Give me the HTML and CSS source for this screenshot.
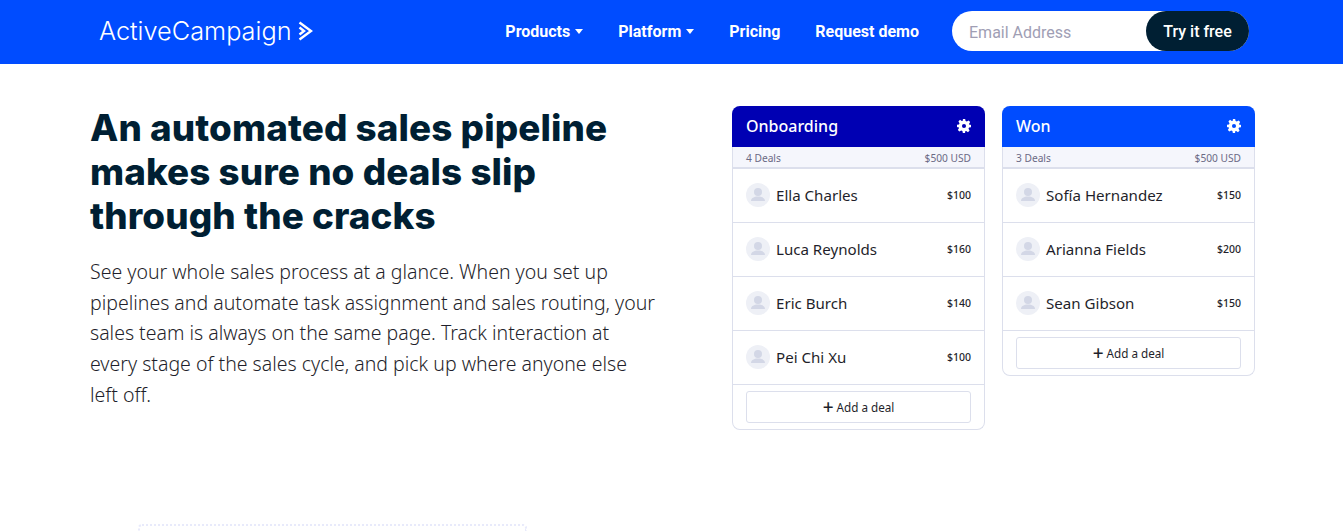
FILE: index.html
```html
<!DOCTYPE html>
<html lang="en">
<head>
  <meta charset="UTF-8" />
  <meta name="viewport" content="width=device-width, initial-scale=1" />
  <title>ActiveCampaign</title>
  <link rel="stylesheet" href="styles.css">
</head>
<body>

  <header class="topbar">
    <a class="logo" href="#">
      <span>ActiveCampaign</span>
      <svg class="logo-mark" width="15" height="20" viewBox="0 0 15 20"><path d="M1.500 1.500 13 10 1.500 18.500M1.500 6.500 6 10 1.500 13.500" fill="none" stroke="#fff" stroke-width="2.400"/></svg>
    </a>
    <nav class="nav">
      <a href="#" class="nav-link has-caret">Products</a>
      <a href="#" class="nav-link has-caret">Platform</a>
      <a href="#" class="nav-link">Pricing</a>
      <a href="#" class="nav-link">Request demo</a>
    </nav>
    <form class="signup">
      <input type="text" placeholder="Email Address" />
      <button type="button">Try it free</button>
    </form>
  </header>

  <main class="feature">
    <section class="copy">
      <h1>An automated sales pipeline makes sure no deals slip through the cracks</h1>
      <p>See your whole sales process at a glance. When you set up pipelines and automate task assignment and sales routing, your sales team is always on the same page. Track interaction at every stage of the sales cycle, and pick up where anyone else left off.</p>
    </section>

    <section class="board">
      <div class="stage">
        <div class="stage-head onboarding">
          <span>Onboarding</span>
          <svg class="gear" width="14" height="14" viewBox="0 0 24 24"><path fill="#fff" fill-rule="evenodd" d="M10 0h4l.7 3.400 2.200.9 2.900-1.900 2.800 2.800-1.900 2.900.9 2.200L24 10v4l-3.400.7-.9 2.200 1.900 2.900-2.800 2.800-2.900-1.900-2.200.9L14 24h-4l-.7-3.400-2.200-.9-2.900 1.900-2.800-2.800 1.900-2.900-.9-2.200L0 14v-4l3.400-.7.9-2.200-1.900-2.900 2.800-2.800 2.900 1.900 2.200-.9zM12 8.500a3.500 3.500 0 1 0 0 7 3.500 3.500 0 0 0 0-7z"/></svg>
        </div>
        <div class="stage-sub"><span>4 Deals</span><span>$500 USD</span></div>
        <div class="deal">
          <svg class="avatar" viewBox="0 0 24 24"><circle cx="12" cy="12" r="12" fill="#eef0f6"/><circle cx="12" cy="9" r="4" fill="#d3d7e6"/><path d="M5 18c0-3 3-4.500 7-4.500s7 1.500 7 4.500z" fill="#d3d7e6"/></svg>
          <span class="deal-name">Ella Charles</span><span class="deal-amount">$100</span>
        </div>
        <div class="deal">
          <svg class="avatar" viewBox="0 0 24 24"><circle cx="12" cy="12" r="12" fill="#eef0f6"/><circle cx="12" cy="9" r="4" fill="#d3d7e6"/><path d="M5 18c0-3 3-4.500 7-4.500s7 1.500 7 4.500z" fill="#d3d7e6"/></svg>
          <span class="deal-name">Luca Reynolds</span><span class="deal-amount">$160</span>
        </div>
        <div class="deal">
          <svg class="avatar" viewBox="0 0 24 24"><circle cx="12" cy="12" r="12" fill="#eef0f6"/><circle cx="12" cy="9" r="4" fill="#d3d7e6"/><path d="M5 18c0-3 3-4.500 7-4.500s7 1.500 7 4.500z" fill="#d3d7e6"/></svg>
          <span class="deal-name">Eric Burch</span><span class="deal-amount">$140</span>
        </div>
        <div class="deal">
          <svg class="avatar" viewBox="0 0 24 24"><circle cx="12" cy="12" r="12" fill="#eef0f6"/><circle cx="12" cy="9" r="4" fill="#d3d7e6"/><path d="M5 18c0-3 3-4.500 7-4.500s7 1.500 7 4.500z" fill="#d3d7e6"/></svg>
          <span class="deal-name">Pei Chi Xu</span><span class="deal-amount">$100</span>
        </div>
        <div class="stage-foot"><button type="button"><b>+</b> Add a deal</button></div>
      </div>

      <div class="stage">
        <div class="stage-head won">
          <span>Won</span>
          <svg class="gear" width="14" height="14" viewBox="0 0 24 24"><path fill="#fff" fill-rule="evenodd" d="M10 0h4l.7 3.400 2.200.9 2.900-1.900 2.800 2.800-1.900 2.900.9 2.200L24 10v4l-3.400.7-.9 2.200 1.900 2.900-2.800 2.800-2.900-1.900-2.200.9L14 24h-4l-.7-3.400-2.200-.9-2.900 1.900-2.800-2.800 1.900-2.900-.9-2.200L0 14v-4l3.400-.7.9-2.200-1.900-2.900 2.800-2.800 2.900 1.900 2.200-.9zM12 8.500a3.500 3.500 0 1 0 0 7 3.500 3.500 0 0 0 0-7z"/></svg>
        </div>
        <div class="stage-sub"><span>3 Deals</span><span>$500 USD</span></div>
        <div class="deal">
          <svg class="avatar" viewBox="0 0 24 24"><circle cx="12" cy="12" r="12" fill="#eef0f6"/><circle cx="12" cy="9" r="4" fill="#d3d7e6"/><path d="M5 18c0-3 3-4.500 7-4.500s7 1.500 7 4.500z" fill="#d3d7e6"/></svg>
          <span class="deal-name">Sofía Hernandez</span><span class="deal-amount">$150</span>
        </div>
        <div class="deal">
          <svg class="avatar" viewBox="0 0 24 24"><circle cx="12" cy="12" r="12" fill="#eef0f6"/><circle cx="12" cy="9" r="4" fill="#d3d7e6"/><path d="M5 18c0-3 3-4.500 7-4.500s7 1.500 7 4.500z" fill="#d3d7e6"/></svg>
          <span class="deal-name">Arianna Fields</span><span class="deal-amount">$200</span>
        </div>
        <div class="deal">
          <svg class="avatar" viewBox="0 0 24 24"><circle cx="12" cy="12" r="12" fill="#eef0f6"/><circle cx="12" cy="9" r="4" fill="#d3d7e6"/><path d="M5 18c0-3 3-4.500 7-4.500s7 1.500 7 4.500z" fill="#d3d7e6"/></svg>
          <span class="deal-name">Sean Gibson</span><span class="deal-amount">$150</span>
        </div>
        <div class="stage-foot"><button type="button"><b>+</b> Add a deal</button></div>
      </div>
    </section>
  </main>

  <div class="next-frame"></div>

</body>
</html>
```

FILE: styles.css
```css
html, body {
  height: 531px;
  overflow: hidden;
}
body {
  margin: 0;
  background-color: #fff;
  color: #001f33;
  font-family: "Noto Sans", sans-serif;
}
a {
  color: inherit;
  text-decoration: none;
}

.topbar {
  display: flex;
  align-items: center;
  height: 64px;
  padding: 0 94px 0 99px;
  background-color: #004cff;
  color: #fff;
}
.logo {
  display: flex;
  align-items: center;
  gap: 6px;
  font-family: "Inter", sans-serif;
  font-weight: 300;
  font-size: 25.300px;
  margin-top: -4px;
}
.logo-mark {
  margin-top: 1px;
}
.nav {
  display: flex;
  align-items: center;
  gap: 35px;
  margin-left: auto;
  margin-top: -2px;
}
.nav-link {
  font-family: "Roboto", sans-serif;
  font-size: 16px;
  font-weight: 700;
}
.has-caret::after {
  content: "";
  display: inline-block;
  margin-left: 5px;
  vertical-align: 3px;
  border-left: 4px solid transparent;
  border-right: 4px solid transparent;
  border-top: 5px solid #fff;
}
.signup {
  display: flex;
  width: 297px;
  height: 40px;
  margin-left: 33px;
  margin-top: -2px;
  border-radius: 20px;
  background-color: #fff;
}
.signup input {
  flex: 1;
  min-width: 0;
  padding: 2px 0 0 17px;
  border: none;
  background: none;
  outline: none;
  font-family: "Roboto", sans-serif;
  font-size: 16px;
}
.signup input::placeholder {
  color: #a09eb4;
}
.signup button {
  width: 103px;
  border: none;
  border-radius: 20px;
  background-color: #001f33;
  color: #fff;
  font-family: "Roboto", sans-serif;
  font-size: 16px;
  font-weight: 500;
}

.feature {
  display: flex;
  justify-content: space-between;
  padding: 42px 88px 0 90px;
}
.copy {
  width: 570px;
}
.copy h1 {
  margin: 0;
  font-family: "Inter", sans-serif;
  font-size: 36.800px;
  font-weight: 800;
  line-height: 44px;
  letter-spacing: 0.1px;
  color: #001f33;
}
.copy p {
  max-width: 567px;
  margin: 19px 0 0;
  font-family: "Noto Sans", sans-serif;
  font-size: 19.500px;
  font-weight: 300;
  line-height: 30.700px;
  color: #1f1f2b;
}

.board {
  display: flex;
  align-items: flex-start;
  gap: 17px;
}
.stage {
  width: 253px;
  box-sizing: border-box;
  border: 1px solid #dcdfec;
  border-top: none;
  border-radius: 8px;
  background-color: #fff;
}
.stage-head {
  display: flex;
  align-items: center;
  justify-content: space-between;
  height: 39px;
  margin: 0 -1px;
  padding: 0 14px 2px;
  border-radius: 8px 8px 0 0;
  color: #fff;
  font-size: 16px;
  font-weight: 500;
}
.onboarding {
  background-color: #0000b3;
}
.won {
  background-color: #004cff;
}
.stage-sub {
  display: flex;
  justify-content: space-between;
  align-items: center;
  height: 18px;
  padding: 2px 13px 0;
  background-color: #f5f6fc;
  border-bottom: 2px solid #dcdfec;
  font-size: 10.200px;
  color: #6b6a85;
}
.deal {
  display: flex;
  align-items: center;
  height: 52px;
  padding: 0 13px 1px;
  border-bottom: 1px solid #dcdfec;
}
.avatar {
  width: 24px;
  height: 24px;
  flex-shrink: 0;
}
.deal-name {
  margin-left: 6px;
  font-size: 15.100px;
  color: #1f1f2b;
}
.deal-amount {
  margin-left: auto;
  font-size: 10.500px;
  font-weight: 500;
  color: #1f1f2b;
}
.stage-foot {
  padding: 6px 13px;
}
.stage-foot button {
  display: block;
  width: 100%;
  height: 32px;
  padding: 0;
  border: 1px solid #dcdfec;
  border-radius: 3px;
  background-color: #fff;
  color: #1f1f2b;
  font-family: "Noto Sans", sans-serif;
  font-size: 11.700px;
}
.stage-foot b {
  font-size: 19px;
  font-weight: 500;
  line-height: 1;
  vertical-align: -2px;
}

.next-frame {
  box-sizing: border-box;
  height: 7px;
  width: 389px;
  margin: 94px 0 0 138px;
  border: 2px dotted #e8eafb;
  border-bottom: none;
  border-radius: 4px 4px 0 0;
}
```
